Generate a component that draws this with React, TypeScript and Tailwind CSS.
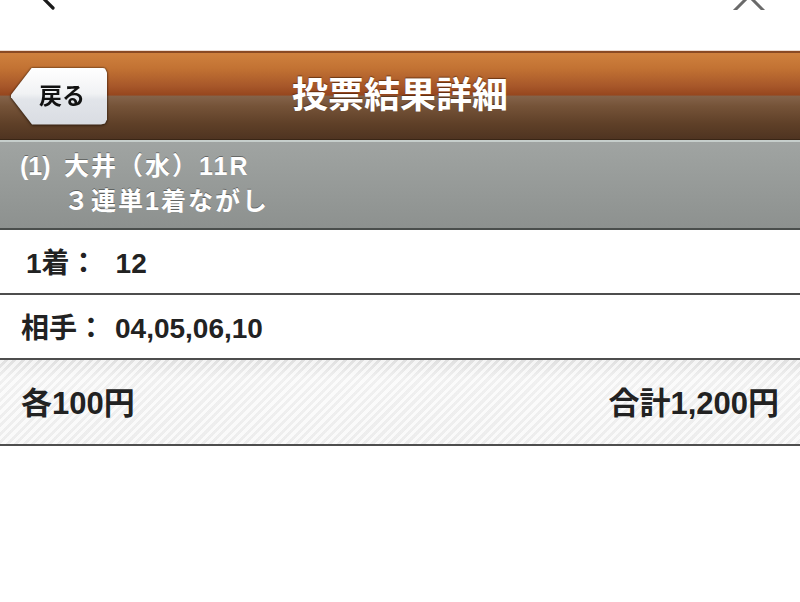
import React from "react";

const font = "font-['Liberation_Sans','Noto_Sans_CJK_JP',sans-serif]";

function TopBar() {
  return (
    <div className="h-[50px] bg-white flex justify-between items-start overflow-hidden">
      {/* back chevron, mostly scrolled out of view */}
      <svg width="40" height="40" viewBox="0 0 40 40" className="ml-[20px] -mt-[30px] shrink-0">
        <path d="M34 4 L16 21 L33 38" fill="none" stroke="#1a1a1a" strokeWidth="3.2" strokeLinecap="round" strokeLinejoin="round" />
      </svg>
      {/* close cross */}
      <svg width="40" height="40" viewBox="0 0 40 40" className="mr-[30px] -mt-[30px] shrink-0">
        <path d="M4 11 L34 41 M34 11 L4 41" fill="none" stroke="#6a6a6a" strokeWidth="3" strokeLinecap="round" />
      </svg>
    </div>
  );
}

function NavBar() {
  return (
    <div className="flex flex-col">
      <div className="h-[1px] bg-[#ecdcd3]" />
      <div className="h-[2px] bg-[#8a4a24]" />
      <div className="h-[86px] grid grid-cols-[1fr_auto_1fr] items-center bg-[linear-gradient(to_bottom,#cf813e_0%,#c27233_18%,#a8582a_38%,#96461e_49%,#84634a_50%,#755338_62%,#5f4028_82%,#4f3421_100%)]">
        <div className="flex items-center">
          <div className="ml-[10px] [filter:drop-shadow(0_0_1px_rgba(40,20,0,0.8))_drop-shadow(0_1px_1px_rgba(0,0,0,0.35))]">
            <div className="w-[97px] h-[57px] flex items-center pl-[29px] bg-[linear-gradient(to_bottom,#ffffff_0%,#f1f2f4_45%,#e2e5ea_55%,#d9dce2_100%)] [clip-path:polygon(22px_0,calc(100%-6px)_0,calc(100%-2px)_1px,100%_5px,100%_calc(100%-5px),calc(100%-2px)_calc(100%-1px),calc(100%-6px)_100%,22px_100%,1px_52%,1px_48%)]">
              <span className={`${font} text-[23px] font-bold text-[#111] leading-none`}>戻る</span>
            </div>
          </div>
        </div>
        <h1 className={`${font} text-[36px] font-bold text-white leading-none [text-shadow:0_-1px_1px_rgba(60,25,0,0.6)]`}>
          投票結果詳細
        </h1>
        <div />
      </div>
      <div className="h-[1px] bg-[#3a2616]" />
    </div>
  );
}

function RaceHeader() {
  return (
    <div className={`${font} border-t-2 border-[#c6cecb] border-b-2 border-b-[#4a4e4c] h-[90px] pt-[7px] bg-[linear-gradient(to_bottom,#a0a4a2,#8d918f)] text-white font-bold text-[25px] leading-[35px] [text-shadow:0_-1px_0_rgba(0,0,0,0.35)]`}>
      <div className="flex pl-[20px]">
        <span className="w-[44px] shrink-0">(1)</span>
        <div className="flex flex-col tracking-[2px]">
          <span>大井（水）11R</span>
          <span>３連単1着ながし</span>
        </div>
      </div>
    </div>
  );
}

function InfoRow({ label, value, pad, gap }: { label: string; value: string; pad: string; gap: string }) {
  return (
    <div className={`${font} h-[65px] pt-[4px] bg-white border-b-2 border-[#4e4e4e] flex items-center ${pad} text-[28px] font-bold text-[#222]`}>
      <span>{label}</span>
      <span className={gap}>{value}</span>
    </div>
  );
}

function Totals() {
  return (
    <div className={`${font} h-[86px] pt-[4px] border-b-2 border-[#4e4e4e] flex items-center justify-between px-[21px] text-[31px] font-bold text-[#222] bg-[repeating-linear-gradient(135deg,rgba(255,255,255,0.6)_0px,rgba(255,255,255,0.6)_3px,rgba(0,0,0,0.02)_3px,rgba(0,0,0,0.02)_6px),linear-gradient(to_bottom,#e4e4e4_0%,#f5f5f5_22%,#f2f2f2_100%)]`}>
      <span>各100円</span>
      <span>合計1,200円</span>
    </div>
  );
}

export default function App() {
  return (
    <div className="w-[800px] h-[602px] bg-white overflow-hidden flex flex-col">
      <TopBar />
      <NavBar />
      <RaceHeader />
      <InfoRow label="1着：" value="12" pad="pl-[26px]" gap="ml-[18px]" />
      <InfoRow label="相手：" value="04,05,06,10" pad="pl-[21px]" gap="ml-[10px]" />
      <Totals />
      <div className="flex-1 bg-white" />
    </div>
  );
}
